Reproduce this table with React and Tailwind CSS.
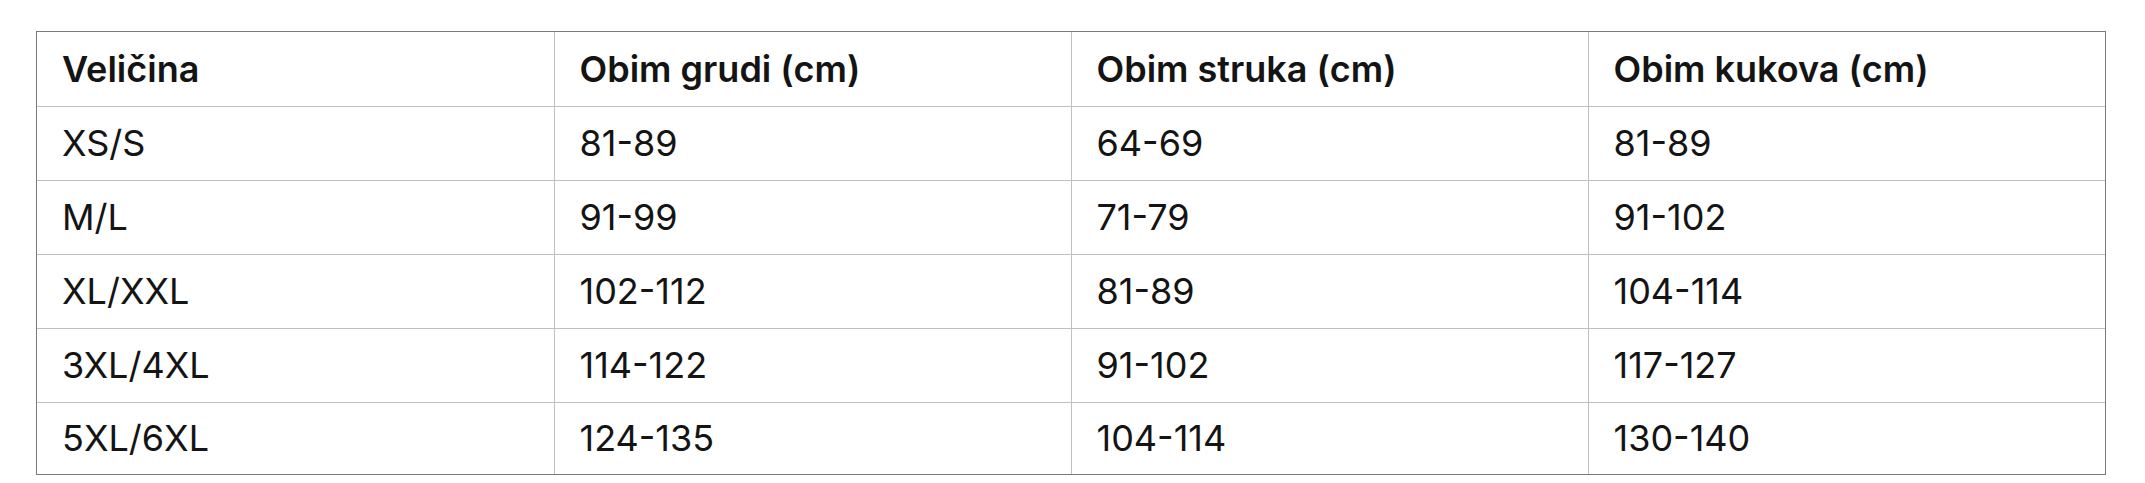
import React from 'react';

const headers = ['Veličina', 'Obim grudi (cm)', 'Obim struka (cm)', 'Obim kukova (cm)'];

const rows = [
  ['XS/S', '81-89', '64-69', '81-89'],
  ['M/L', '91-99', '71-79', '91-102'],
  ['XL/XXL', '102-112', '81-89', '104-114'],
  ['3XL/4XL', '114-122', '91-102', '117-127'],
  ['5XL/6XL', '124-135', '104-114', '130-140'],
];

const cellClass = 'pl-[25px] pr-4 py-0 text-left align-middle border-[#c0c0c0]';

const App = () => {
  return (
    <div className="min-h-screen bg-white pl-[36px] pr-[39px] pt-[31px] font-['Inter','Noto_Sans',sans-serif] text-[36px] text-[#141414]">
      <div className="border border-[#7a7a7a]">
        <table className="w-full table-fixed border-collapse">
          <thead>
            <tr>
              {headers.map((h, i) => (
                <th
                  key={h}
                  className={`${cellClass} h-[74px] font-semibold border-b ${i < headers.length - 1 ? 'border-r' : ''}`}>
                  {h}
                </th>
              ))}
            </tr>
          </thead>
          <tbody>
            {rows.map((row, r) => {
              const last = r === rows.length - 1;
              return (
                <tr key={row[0]}>
                  {row.map((value, i) => (
                    <td
                      key={i}
                      className={`${cellClass} font-normal ${last ? 'h-[72px]' : 'h-[74px] border-b'} ${
                        i < row.length - 1 ? 'border-r' : ''
                      }`}>
                      {value}
                    </td>
                  ))}
                </tr>
              );
            })}
          </tbody>
        </table>
      </div>
    </div>
  );
};

export default App;
